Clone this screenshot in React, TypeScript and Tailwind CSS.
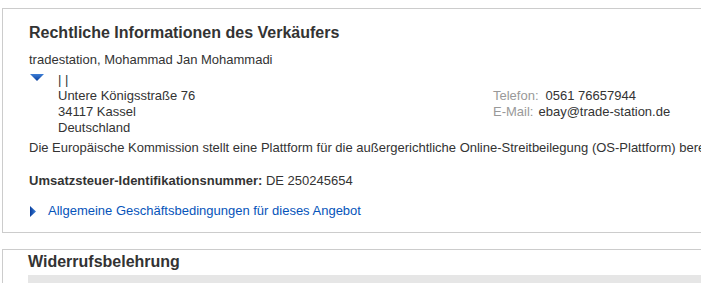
import React from "react";

export default function App() {
  return (
    <div
      className="w-[701px] h-[283px] overflow-hidden bg-white text-[13px] leading-4 text-[#333]"
      style={{ fontFamily: '"Liberation Sans", Arial, sans-serif' }}
    >
      <div className="ml-[2px] mt-[8px] w-[740px] border border-[#cccccc] pl-[26px] pt-[14px] pb-[13px]">
        <h2 className="text-[16px] leading-5 font-bold text-[#333]">
          Rechtliche Informationen des Verkäufers
        </h2>
        <div className="mt-[9px]">tradestation, Mohammad Jan Mohammadi</div>
        <div className="mt-[4px] flex">
          <div className="w-[29px] pt-[2px] pl-[1px]">
            <svg width="14" height="7" viewBox="0 0 14 7">
              <defs>
                <linearGradient id="gd" x1="0" y1="0" x2="0" y2="1">
                  <stop offset="0" stopColor="#3d7fd6" />
                  <stop offset="1" stopColor="#0a3f9e" />
                </linearGradient>
              </defs>
              <polygon points="0,0 14,0 7,7" fill="url(#gd)" />
            </svg>
          </div>
          <div className="w-[435px]">
            <div>| |</div>
            <div>Untere Königsstraße 76</div>
            <div>34117 Kassel</div>
            <div>Deutschland</div>
          </div>
          <div className="pt-4">
            <div>
              <span className="text-[#999]">Telefon:</span>
              <span className="ml-[7px]">0561 76657944</span>
            </div>
            <div>
              <span className="text-[#999]">E-Mail:</span>
              <span className="ml-[5px]">ebay@trade-station.de</span>
            </div>
          </div>
        </div>
        <div className="mt-[4px] whitespace-nowrap">
          Die Europäische Kommission stellt eine Plattform für die außergerichtliche Online-Streitbeilegung (OS-Plattform) bereit
        </div>
        <div className="mt-[17px]">
          <span className="font-bold">Umsatzsteuer-Identifikationsnummer:</span> DE 250245654
        </div>
        <div className="mt-[14px] flex items-center">
          <svg width="6" height="11" viewBox="0 0 6 11" className="ml-[1px]">
            <defs>
              <linearGradient id="gr" x1="0" y1="0" x2="1" y2="0">
                <stop offset="0" stopColor="#0a3f9e" />
                <stop offset="1" stopColor="#3d7fd6" />
              </linearGradient>
            </defs>
            <polygon points="0,0 6,5.5 0,11" fill="url(#gr)" />
          </svg>
          <span className="ml-[12px] text-[#0654ba]">
            Allgemeine Geschäftsbedingungen für dieses Angebot
          </span>
        </div>
      </div>
      <div className="ml-[2px] mt-[16px] w-[740px] border border-[#cccccc] pl-[25px] pt-[2px]">
        <h2 className="text-[16px] leading-5 font-bold text-[#333]">Widerrufsbelehrung</h2>
        <div className="mt-[3px] h-[20px] bg-[#e6e6e6]" />
      </div>
    </div>
  );
}
